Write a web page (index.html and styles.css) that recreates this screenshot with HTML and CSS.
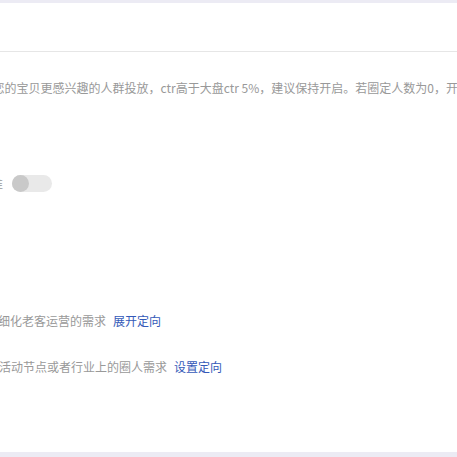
FILE: index.html
```html
<!DOCTYPE html>
<html lang="zh">
<head>
<meta charset="utf-8">
<link rel="stylesheet" href="styles.css">
</head>
<body>
<div class="panel">
  <div class="panel-head"></div>
  <div class="panel-body">
    <p class="desc desc-1">对您的宝贝更感兴趣的人群投放，ctr高于大盘ctr 5%，建议保持开启。若圈定人数为0，开启后将不会生效</p>
    <div class="switch-row">
      <span class="switch-label">准</span>
      <span class="switch"><span class="knob"></span></span>
    </div>
    <p class="desc desc-2">满足细化老客运营的需求<a class="link">展开定向</a></p>
    <p class="desc desc-3">满足活动节点或者行业上的圈人需求<a class="link">设置定向</a></p>
  </div>
</div>
</body>
</html>
```

FILE: styles.css
```css
html, body {
  margin: 0;
  padding: 0;
  background: #ecebf4;
  overflow: hidden;
}
body {
  font-family: "Noto Sans CJK SC", "Noto Sans", sans-serif;
  font-size: 12px;
  color: #999999;
}
.panel {
  margin-top: 3px;
  height: 449px;
  background: #ffffff;
  overflow: hidden;
}
.panel-head {
  height: 48px;
  border-bottom: 1px solid #e6e6e6;
}
.panel-body {
  padding-top: 26px;
}
.desc {
  margin: 0;
  height: 20px;
  line-height: 20px;
  white-space: nowrap;
}
.desc-1 {
  margin-left: -19.5px;
}
.switch-row {
  display: flex;
  align-items: center;
  margin-top: 77px;
  margin-left: -9px;
  height: 17px;
}
.switch-label {
  width: 12px;
  margin-right: 9px;
  line-height: 17px;
}
.switch {
  position: relative;
  display: block;
  width: 40px;
  height: 17px;
  border-radius: 9px;
  background: #e9e9e9;
}
.knob {
  position: absolute;
  left: 0;
  top: 0;
  width: 17px;
  height: 17px;
  border-radius: 50%;
  background: #c9c9c9;
}
.desc-2 {
  margin-top: 119px;
  margin-left: -26px;
}
.desc-3 {
  margin-top: 26px;
  margin-left: -25px;
}
.link {
  margin-left: 7px;
  color: #3459b8;
  cursor: pointer;
}
```
